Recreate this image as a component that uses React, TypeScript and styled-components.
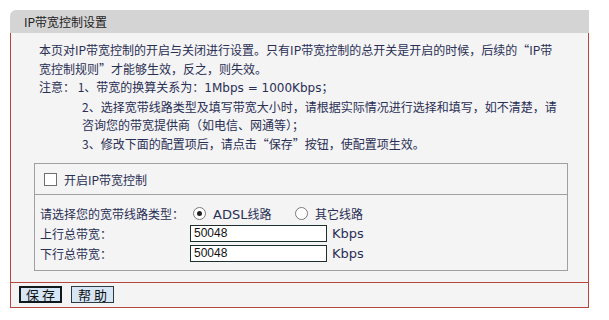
import React from 'react';
import styled, { createGlobalStyle } from 'styled-components';

const GlobalStyle = createGlobalStyle`
  body {
    margin: 0;
    background: #ffffff;
    font-family: "DejaVu Sans", "Noto Sans CJK SC", sans-serif;
    font-size: 12px;
    color: #2a2f55;
  }
`;

const Page = styled.div`
  padding: 10px;
  width: 579px;
`;

const Header = styled.div`
  height: 23px;
  line-height: 23px;
  background: #d4d4d4;
  border-top-left-radius: 6px;
  padding-left: 14px;
  color: #222222;
  font-family: "Noto Sans CJK SC", sans-serif;
  font-size: 12px;
`;

const Panel = styled.div`
  background: #f4f4f4;
  border: 1px solid #b5473e;
  border-top: none;
`;

const Intro = styled.div`
  padding: 8px 0 0 28px;
  line-height: 18.5px;
  white-space: nowrap;
  font-family: "Noto Sans CJK SC", sans-serif;
`;

const Latin = styled.span`
  font-family: "DejaVu Sans", sans-serif;
`;

const NoteItem = styled.div<{ $indent: number }>`
  padding-left: ${p => p.$indent}px;
`;

const InnerBox = styled.div`
  margin: 10px 0 11px 23px;
  width: 532px;
  border: 1px solid #a0a0a0;
`;

const CheckRow = styled.label`
  display: flex;
  align-items: center;
  height: 30px;
  padding-left: 9px;
  gap: 7px;
  font-family: "Noto Sans CJK SC", sans-serif;
  border-bottom: 1px solid #a0a0a0;
`;

const Box = styled.span`
  width: 11px;
  height: 11px;
  border: 1px solid #6f6f6f;
  background: #ffffff;
`;

const Form = styled.div`
  padding: 8px 0 7px 5px;
`;

const Row = styled.div`
  display: flex;
  align-items: center;
  height: 20px;
`;

const Label = styled.span`
  width: 150px;
  font-family: "Noto Sans CJK SC", sans-serif;
`;

const Radio = styled.span<{ $checked?: boolean }>`
  position: relative;
  width: 11px;
  height: 11px;
  border: 1px solid #7a7a7a;
  border-radius: 50%;
  background: #ffffff;
  margin: 0 7px 0 3px;
  &::after {
    content: '';
    display: ${p => (p.$checked ? 'block' : 'none')};
    position: absolute;
    left: 3px;
    top: 3px;
    width: 5px;
    height: 5px;
    border-radius: 50%;
    background: #222222;
  }
`;

const Option = styled.span<{ $width?: number }>`
  width: ${p => (p.$width ? `${p.$width}px` : 'auto')};
  font-size: 13px;
`;

const Input = styled.input`
  box-sizing: border-box;
  width: 137px;
  height: 17px;
  margin: 0;
  padding: 0 3px;
  border: 1px solid #1d2f2f;
  background: #ffffff;
  font-family: "Liberation Sans", sans-serif;
  font-size: 12px;
  color: #111111;
  outline: none;
`;

const Unit = styled.span`
  margin-left: 5px;
  font-size: 13px;
`;

const Footer = styled.div`
  display: flex;
  gap: 9px;
  padding: 3px 0 4px 8px;
  border-top: 1px solid #b5473e;
`;

const Button = styled.button<{ $primary?: boolean }>`
  box-sizing: border-box;
  width: 43px;
  height: 17px;
  padding: 0;
  background: #d6e6f5;
  border: ${p => (p.$primary ? '2px solid #0f1a1f' : '1px solid #2a3a40')};
  font-family: "Noto Sans CJK SC", sans-serif;
  font-size: 13px;
  line-height: 13px;
  letter-spacing: 3px;
  text-indent: 3px;
  color: #111111;
`;

export default function App() {
  return (
    <Page>
      <GlobalStyle />
      <Header>IP带宽控制设置</Header>
      <Panel>
        <Intro>
          <div>本页对IP带宽控制的开启与关闭进行设置。只有IP带宽控制的总开关是开启的时候，后续的“IP带</div>
          <div>宽控制规则”才能够生效，反之，则失效。</div>
          <div>注意： 1、带宽的换算关系为：<Latin>1Mbps = 1000Kbps</Latin>；</div>
          <NoteItem $indent={43}>2、选择宽带线路类型及填写带宽大小时，请根据实际情况进行选择和填写，如不清楚，请</NoteItem>
          <NoteItem $indent={43}>咨询您的带宽提供商（如电信、网通等）；</NoteItem>
          <NoteItem $indent={43}>3、修改下面的配置项后，请点击“保存”按钮，使配置项生效。</NoteItem>
        </Intro>
        <InnerBox>
          <CheckRow>
            <Box />
            开启IP带宽控制
          </CheckRow>
          <Form>
            <Row>
              <Label>请选择您的宽带线路类型：</Label>
              <Radio $checked />
              <Option $width={79}>ADSL<span style={{ fontFamily: '"Noto Sans CJK SC", sans-serif', fontSize: 12 }}>线路</span></Option>
              <Radio />
              <Option style={{ fontFamily: '"Noto Sans CJK SC", sans-serif', fontSize: 12 }}>其它线路</Option>
            </Row>
            <Row>
              <Label>上行总带宽：</Label>
              <Input defaultValue="50048" />
              <Unit>Kbps</Unit>
            </Row>
            <Row>
              <Label>下行总带宽：</Label>
              <Input defaultValue="50048" />
              <Unit>Kbps</Unit>
            </Row>
          </Form>
        </InnerBox>
        <Footer>
          <Button $primary>保存</Button>
          <Button>帮助</Button>
        </Footer>
      </Panel>
    </Page>
  );
}
